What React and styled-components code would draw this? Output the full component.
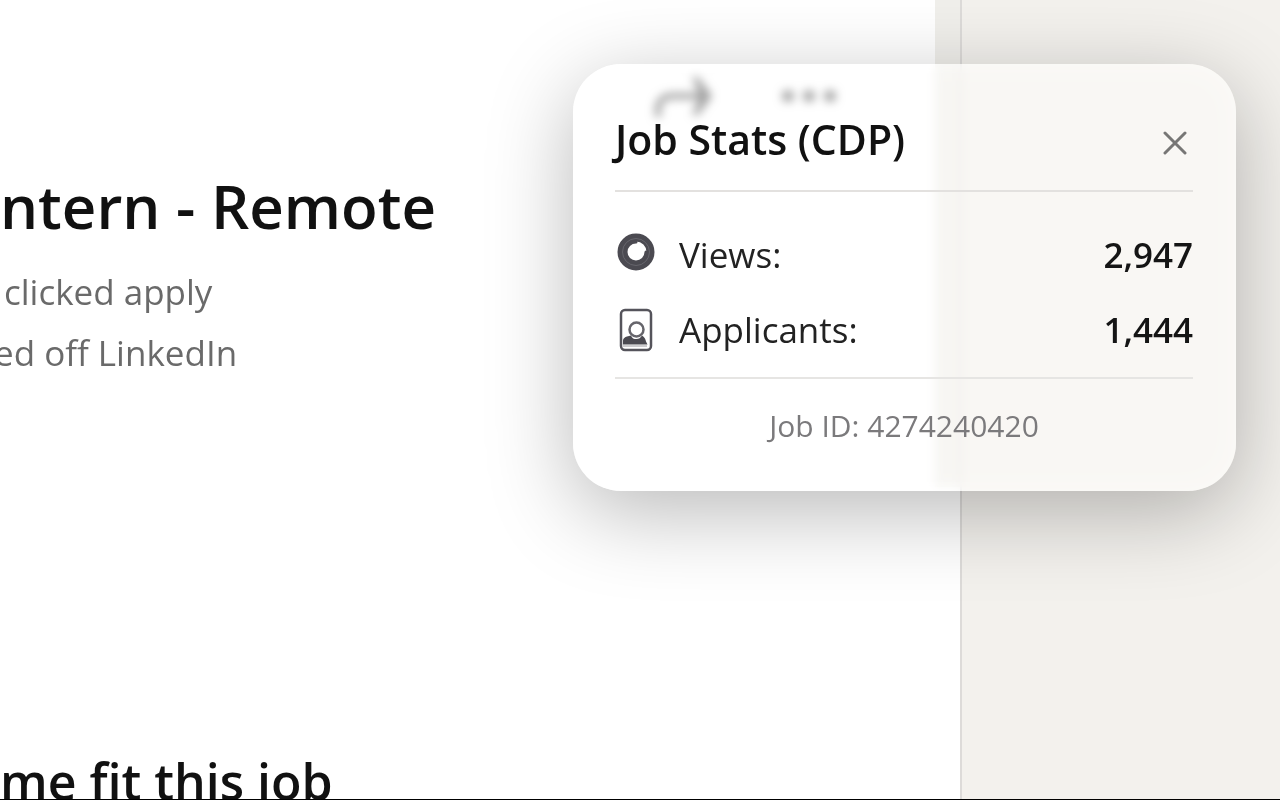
import React, { useState } from "react";
import styled, { createGlobalStyle } from "styled-components";

const stats = [
  { label: "Views:", value: "2,947", icon: "views" },
  { label: "Applicants:", value: "1,444", icon: "applicants" },
];

const ViewsIcon = () => (
  <svg width="42" height="44" viewBox="0 0 42 44" fill="none">
    <circle cx="21" cy="19" r="14.500" stroke="#4b4a51" strokeWidth="8" />
    <circle cx="21" cy="19" r="13.500" stroke="#66656c" strokeWidth="1" />
    <path d="M21 9a10 10 0 1 0 10 10" stroke="#4b4a51" strokeWidth="3" strokeLinecap="round" />
  </svg>
);

const ApplicantsIcon = () => (
  <svg width="42" height="44" viewBox="0 0 42 44" fill="none">
    <rect x="6" y="2" width="30" height="40" rx="4" stroke="#55545b" strokeWidth="2.500" />
    <circle cx="21.500" cy="21.500" r="7" stroke="#66656b" strokeWidth="2.500" />
    <path
      d="M8 36.500v-4c0-2 2-3.500 4-4l4-1c1 3 3 3.500 5.500 3.500s4-1 5.500-3.500c3 2 3.500 4 4 6l1.500 3z"
      fill="#4b4a51"
    />
    <path d="M8 38h24" stroke="#99989d" strokeWidth="1" />
  </svg>
);

const ShareIcon = () => (
  <svg width="62" height="46" viewBox="0 0 62 46" fill="none">
    <path d="M6 44v-8c0-8 6-13 14-13h36" stroke="#555" strokeWidth="6" />
    <path d="M40 4h6l14 19-14 19h-6l8-19z" fill="#555" />
  </svg>
);

const MoreIcon = () => (
  <svg width="58" height="14" viewBox="0 0 58 14" fill="#555">
    <circle cx="8" cy="7" r="6" />
    <circle cx="29" cy="7" r="6" />
    <circle cx="50" cy="7" r="6" />
  </svg>
);

const CloseIcon = () => (
  <svg width="24" height="24" viewBox="0 0 24 24" fill="none">
    <path
      d="M2 2l20 20M22 2L2 22"
      stroke="#777675"
      strokeWidth="3"
      strokeLinecap="round"
    />
  </svg>
);

const App = () => {
  const [open, setOpen] = useState(true);

  return (
    <>
      <GlobalStyle />
      <Page>
        <Main>
          <Toolbar>
            <IconButton aria-label="Share">
              <ShareIcon />
            </IconButton>
            <IconButton aria-label="More options">
              <MoreIcon />
            </IconButton>
          </Toolbar>
          <Title>ntern - Remote</Title>
          <Meta $indent>clicked apply</Meta>
          <Meta>ed off LinkedIn</Meta>
          <SectionTitle>me fit this job</SectionTitle>
        </Main>
        <ScrollRail>
          <ScrollThumb />
        </ScrollRail>
        <Aside />
      </Page>
      {open && (
        <StatsCard aria-label="Job Stats">
          <CardHeader>
            <CardTitle>Job Stats (CDP)</CardTitle>
            <IconButton aria-label="Close" onClick={() => setOpen(false)}>
              <CloseIcon />
            </IconButton>
          </CardHeader>
          <StatList>
            {stats.map((stat) => (
              <StatRow key={stat.label}>
                <StatLabel>
                  {stat.icon === "views" ? <ViewsIcon /> : <ApplicantsIcon />}
                  {stat.label}
                </StatLabel>
                <StatValue>{stat.value}</StatValue>
              </StatRow>
            ))}
          </StatList>
          <CardFooter>Job ID: 4274240420</CardFooter>
        </StatsCard>
      )}
    </>
  );
};

const GlobalStyle = createGlobalStyle`
  * {
    box-sizing: border-box;
    margin: 0;
    padding: 0;
  }
  body {
    font-family: "Open Sans", "Noto Sans", sans-serif;
    background-color: #f3f1ed;
    overflow: hidden;
  }
`;

const Page = styled.div`
  display: flex;
  height: 100vh;
  border-bottom: 1px solid #000;
  overflow: hidden;
`;

const Main = styled.main`
  display: flex;
  flex-direction: column;
  flex: 1;
  background-color: #fff;
  white-space: nowrap;
`;

const Toolbar = styled.div`
  display: flex;
  justify-content: flex-end;
  align-items: center;
  gap: 66px;
  padding: 72px 97px 0 0;
  height: 120px;
`;

const IconButton = styled.button`
  display: flex;
  border: none;
  background: none;
  cursor: pointer;
`;

const Title = styled.h1`
  margin-top: 42px;
  font-size: 60px;
  line-height: 88px;
  font-weight: 600;
  color: #111;
`;

const Meta = styled.p`
  padding-left: ${(props) => (props.$indent ? "4px" : "0")};
  margin-top: ${(props) => (props.$indent ? "11px" : "0")};
  font-size: 35px;
  line-height: 61px;
  text-indent: ${(props) => (props.$indent ? "0" : "-6px")};
  color: #6a6a6a;
`;

const SectionTitle = styled.h2`
  height: 56px;
  margin-top: auto;
  font-size: 50px;
  line-height: 76px;
  font-weight: 600;
  color: #111;
`;

const ScrollRail = styled.div`
  width: 27px;
  background-color: #fff;
  border-right: 2px solid #dddbd9;
`;

const ScrollThumb = styled.div`
  height: 61%;
  background-color: #f0efeb;
`;

const Aside = styled.aside`
  flex: 0 0 318px;
  background-color: #f3f1ed;
`;

const StatsCard = styled.section`
  position: fixed;
  top: 64px;
  right: 44px;
  width: 663px;
  padding: 42px 43px 41px 42px;
  border-radius: 48px;
  background-color: rgba(255, 255, 255, 0.45);
  backdrop-filter: blur(5px) saturate(150%);
  box-shadow: 0 21px 85px rgba(0, 0, 0, 0.28),
    inset 0 0 30px rgba(255, 255, 255, 0.35);
`;

const CardHeader = styled.header`
  display: flex;
  justify-content: space-between;
  align-items: center;
  height: 86px;
  padding: 0 6px 11px 0;
  border-bottom: 2px solid #e3e1df;
`;

const CardTitle = styled.h2`
  padding-bottom: 8px;
  font-size: 41px;
  line-height: 64px;
  font-weight: 600;
  color: #111;
`;

const StatList = styled.div`
  padding: 25px 0 10px;
`;

const StatRow = styled.div`
  display: flex;
  justify-content: space-between;
  align-items: center;
  height: 75px;
  font-size: 35px;
  line-height: 48px;
  color: #222;
`;

const StatLabel = styled.span`
  display: flex;
  align-items: center;
  gap: 22px;
`;

const StatValue = styled.span`
  font-weight: 600;
  color: #151515;
`;

const CardFooter = styled.footer`
  padding-top: 23px;
  border-top: 2px solid #e6e5e3;
  font-size: 30px;
  line-height: 48px;
  text-align: center;
  color: #7b7a7c;
`;

export default App;
